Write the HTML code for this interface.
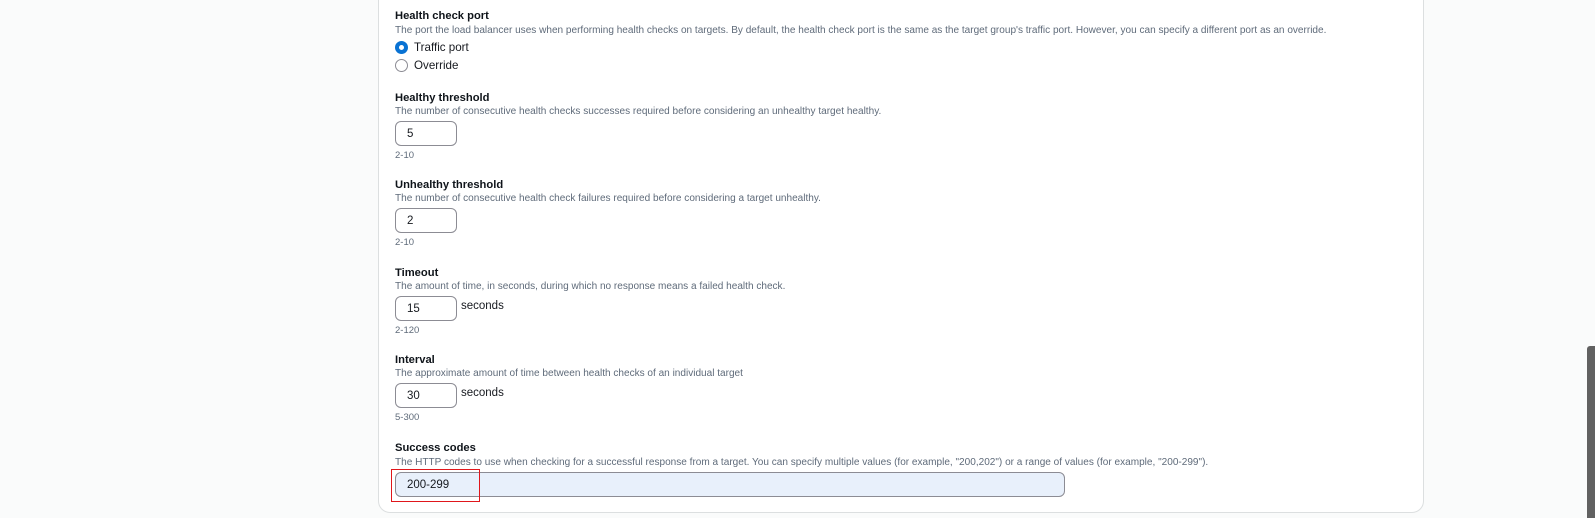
<!DOCTYPE html><html><head><style>
body{margin:0;width:1595px;height:518px;background:#fafbfb;position:relative;overflow:hidden;font-family:"Liberation Sans",sans-serif;color:#16191f}
.panel{position:absolute;left:378px;top:-20px;width:1046px;height:533px;background:#fff;border:1px solid #dcdfe0;border-radius:12px;box-sizing:border-box}
.t{position:absolute;left:395px;font-size:11.2px;font-weight:bold;color:#0f141a}
.d{position:absolute;left:395px;font-size:10.05px;color:#5f6b7a;white-space:nowrap}
.h{position:absolute;left:395px;font-size:9.5px;color:#5f6b7a}
.in{position:absolute;left:395px;width:62px;height:25px;border:1px solid #8c8c94;border-radius:6px;box-sizing:border-box;font-size:11.5px;padding:6px 0 0 11px}
.s{position:absolute;left:461px;font-size:11.5px}
.r{position:absolute;left:395px;width:13px;height:13px;border-radius:50%;box-sizing:border-box}
.rl{position:absolute;left:414px;font-size:11.6px}
</style></head><body>
<div class="panel"></div>
<div class="t" style="top:10px">Health check port</div>
<div class="d" style="top:25px">The port the load balancer uses when performing health checks on targets. By default, the health check port is the same as the target group's traffic port. However, you can specify a different port as an override.</div>
<div class="r" style="top:41px;border:4px solid #0972d3;background:#fff"></div><div class="rl" style="top:41px">Traffic port</div>
<div class="r" style="top:59px;border:1px solid #8c8c94"></div><div class="rl" style="top:59px">Override</div>

<div class="t" style="top:92px">Healthy threshold</div>
<div class="d" style="top:106px">The number of consecutive health checks successes required before considering an unhealthy target healthy.</div>
<div class="in" style="top:121px">5</div><div class="h" style="top:150px">2-10</div>

<div class="t" style="top:179px">Unhealthy threshold</div>
<div class="d" style="top:193px">The number of consecutive health check failures required before considering a target unhealthy.</div>
<div class="in" style="top:208px">2</div><div class="h" style="top:237px">2-10</div>

<div class="t" style="top:267px">Timeout</div>
<div class="d" style="top:281px">The amount of time, in seconds, during which no response means a failed health check.</div>
<div class="in" style="top:296px">15</div><div class="s" style="top:300px">seconds</div><div class="h" style="top:325px">2-120</div>

<div class="t" style="top:354px">Interval</div>
<div class="d" style="top:368px">The approximate amount of time between health checks of an individual target</div>
<div class="in" style="top:383px">30</div><div class="s" style="top:387px">seconds</div><div class="h" style="top:412px">5-300</div>

<div class="t" style="top:442px">Success codes</div>
<div class="d" style="top:457px">The HTTP codes to use when checking for a successful response from a target. You can specify multiple values (for example, "200,202") or a range of values (for example, "200-299").</div>
<div class="in" style="top:472px;width:670px;background:#e8f0fb">200-299</div>
<div style="position:absolute;left:391px;top:469px;width:89px;height:33px;border:1px solid #e0161b;box-sizing:border-box"></div>
<div style="position:absolute;left:1587px;top:346px;width:8px;height:172px;background:#616161;border-radius:3px 0 0 0"></div>
</body></html>
